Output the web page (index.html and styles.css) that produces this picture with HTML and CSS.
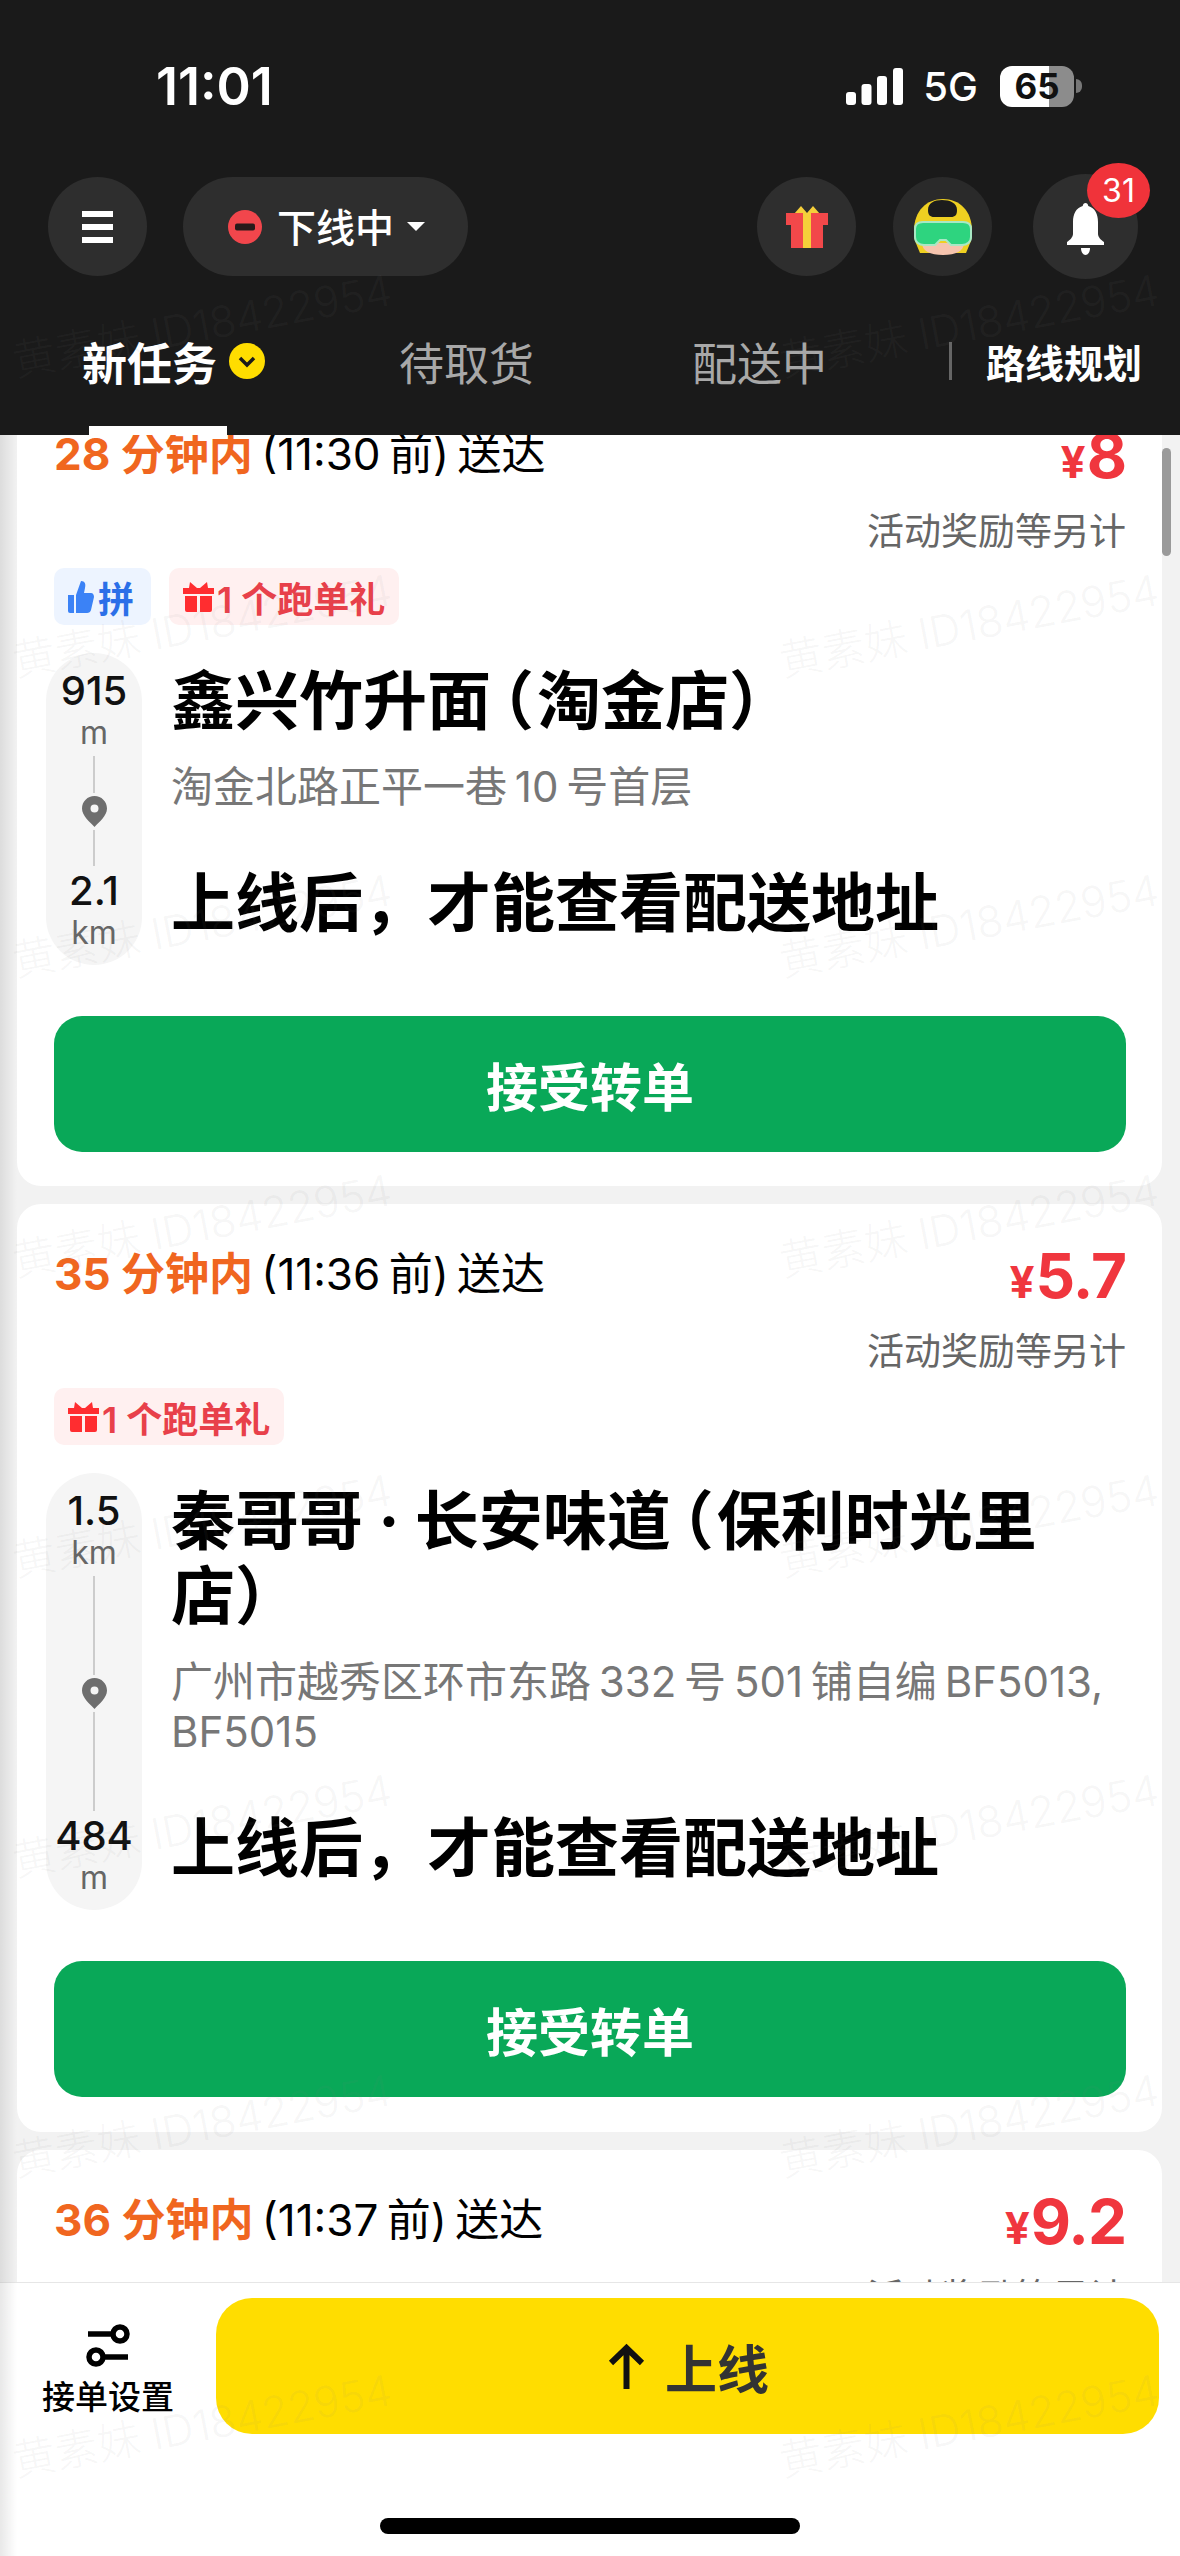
FILE: index.html
```html
<!DOCTYPE html>
<html lang="zh-CN">
<head>
    <meta charset="utf-8">
    <title>新任务</title>
    <link rel="stylesheet" href="styles.css">
</head>
<body>
<div class="phone">
    <header class="header">
        <div class="status">
            <span class="clock">11:01</span>
            <div class="status-right">
                <svg class="signal" width="57" height="37" viewBox="0 0 57 37"><rect x="0" y="24" width="10" height="13" rx="3"/><rect x="15.500" y="16" width="10" height="21" rx="3"/><rect x="31" y="8" width="10" height="29" rx="3"/><rect x="47" y="0" width="10" height="37" rx="3"/></svg>
                <span class="net">5G</span>
                <div class="battery"><span>65</span></div>
                <i class="battery-nub"></i>
            </div>
        </div>

        <div class="toolbar">
            <div class="round">
                <svg width="31" height="32" viewBox="0 0 31 32" fill="#fff"><rect width="31" height="6"/><rect y="13" width="31" height="6"/><rect y="26" width="31" height="6"/></svg>
            </div>
            <div class="state">
                <svg width="34" height="34" viewBox="0 0 34 34"><circle cx="17" cy="17" r="17" fill="#f2464c"/><rect x="7" y="13.500" width="20" height="7" rx="2" fill="#2a1a1a"/></svg>
                <span>下线中</span>
                <i class="caret"></i>
            </div>
            <div class="round round-gift">
                <svg width="42" height="42" viewBox="0 0 42 42"><path d="M8 8L15 0l6 7 6-7 7 8z" fill="#f5cf3a"/><rect y="7" width="42" height="12" fill="#f2484a"/><rect x="5" y="19" width="32" height="23" fill="#f2484a"/><rect x="17" y="7" width="8" height="35" fill="#f5cf3a"/></svg>
            </div>
            <div class="round round-avatar">
                <svg width="62" height="56" viewBox="0 0 62 56">
                    <path d="M3 42C-2 16 12 0 31 0s33 16 28 42l-5 12H8z" fill="#efd021"/>
                    <path d="M16 11C16 4 22 1 30 1s15 3 15 10c0 5-2 7-6 7H22c-4 0-6-2-6-7z" fill="#1c1c1c"/>
                    <path d="M10 44h42c0 8-8 12-21 12S10 52 10 44z" fill="#f6c4ae"/>
                    <path d="M3 30c0-5 3-7 8-7h40c5 0 8 2 8 7v8c0 5-4 8-9 8H39l-5-5h-6l-5 5H12C7 46 3 43 3 38z" fill="#2ed47f" stroke="#a8e8c4" stroke-width="2"/>
                </svg>
            </div>
            <div class="round round-bell">
                <svg width="37" height="52" viewBox="0 0 37 52" fill="#fff"><path d="M18.500 0c1.500 0 2.500 1 2.800 3C28 5 31 11 31 19v12c0 3 3 6 6 8v3H0v-3c3-2 6-5 6-8V19C6 11 9 5 15.700 3 16 1 17 0 18.500 0z"/><path d="M14 45h9c0 4-2 7-4.500 7S14 49 14 45z"/></svg>
                <span class="badge">31</span>
            </div>
        </div>

        <nav class="tabs">
            <div class="tab tab-on">
                <span>新任务</span>
                <svg width="36" height="36" viewBox="0 0 36 36"><circle cx="18" cy="18" r="18" fill="#ffdd00"/><path d="M11 15l7 7 7-7" fill="none" stroke="#1a1a1a" stroke-width="3.500"/></svg>
                <i class="tab-line"></i>
            </div>
            <div class="tab">待取货</div>
            <div class="tab">配送中</div>
            <i class="tab-sep"></i>
            <div class="route">路线规划</div>
        </nav>
    </header>

    <main class="list">
        <section class="card card-first">
            <div class="head">
                <div class="eta"><b>28 分钟内</b> (11:30 前) 送达</div>
                <div class="fee"><div class="price"><small>¥</small>8</div><div class="note">活动奖励等另计</div></div>
            </div>
            <div class="tags">
                <span class="tag tag-blue">
                    <svg width="26" height="32" viewBox="0 0 26 32" fill="#3b82f6"><path d="M0 14h6v18H2a2 2 0 0 1-2-2z"/><path d="M8 14l5-14c4 0 5 3 4 7l-1 5h7c2 0 3 2 3 4l-3 13c-.5 2-2 3-4 3H8z"/></svg>拼</span>
                <span class="tag tag-red">
                    <svg class="gift" width="31" height="30" viewBox="0 0 31 30" fill="#ff2d30"><path d="M7 0l7 6h3l7-6 1 6h6v6H0V6h6z"/><path d="M2 14h12v16H4a2 2 0 0 1-2-2zM17 14h12v14a2 2 0 0 1-2 2H17z"/></svg>1 个跑单礼</span>
            </div>
            <div class="body">
                <div class="route-bar">
                    <div class="dist">915</div>
                    <div class="unit">m</div>
                    <i class="rule"></i>
                    <svg class="pin" width="25" height="31" viewBox="0 0 25 31"><path fill-rule="evenodd" d="M12.500 0C19.400 0 25 5.500 25 12.500 25 20 17 26 12.500 31 8 26 0 20 0 12.500 0 5.500 5.600 0 12.500 0zm0 8.500a4 4 0 1 0 0 8 4 4 0 0 0 0-8z" fill="#6e6e6e"/></svg>
                    <i class="rule"></i>
                    <div class="dist">2.1</div>
                    <div class="unit">km</div>
                </div>
                <div class="info">
                    <h2 class="shop">鑫兴竹升面<span class="paren">（</span>淘金店）</h2>
                    <p class="addr">淘金北路正平一巷 10 号首层</p>
                    <p class="locked">上线后，才能查看配送地址</p>
                </div>
            </div>
            <button class="accept">接受转单</button>
        </section>

        <section class="card">
            <div class="head">
                <div class="eta"><b>35 分钟内</b> (11:36 前) 送达</div>
                <div class="fee"><div class="price"><small>¥</small>5.7</div><div class="note">活动奖励等另计</div></div>
            </div>
            <div class="tags">
                <span class="tag tag-red">
                    <svg class="gift" width="31" height="30" viewBox="0 0 31 30" fill="#ff2d30"><path d="M7 0l7 6h3l7-6 1 6h6v6H0V6h6z"/><path d="M2 14h12v16H4a2 2 0 0 1-2-2zM17 14h12v14a2 2 0 0 1-2 2H17z"/></svg>1 个跑单礼</span>
            </div>
            <div class="body">
                <div class="route-bar">
                    <div class="dist">1.5</div>
                    <div class="unit">km</div>
                    <i class="rule"></i>
                    <svg class="pin" width="25" height="31" viewBox="0 0 25 31"><path fill-rule="evenodd" d="M12.500 0C19.400 0 25 5.500 25 12.500 25 20 17 26 12.500 31 8 26 0 20 0 12.500 0 5.500 5.600 0 12.500 0zm0 8.500a4 4 0 1 0 0 8 4 4 0 0 0 0-8z" fill="#6e6e6e"/></svg>
                    <i class="rule"></i>
                    <div class="dist">484</div>
                    <div class="unit">m</div>
                </div>
                <div class="info">
                    <h2 class="shop">秦哥哥 · 长安味道<span class="paren">（</span>保利时光里店）</h2>
                    <p class="addr">广州市越秀区环市东路 332 号 501 铺自编 BF5013, BF5015</p>
                    <p class="locked">上线后，才能查看配送地址</p>
                </div>
            </div>
            <button class="accept">接受转单</button>
        </section>

        <section class="card">
            <div class="head">
                <div class="eta"><b>36 分钟内</b> (11:37 前) 送达</div>
                <div class="fee"><div class="price"><small>¥</small>9.2</div><div class="note">活动奖励等另计</div></div>
            </div>
        </section>

        <i class="scrollbar"></i>
    </main>

    <footer class="bottom">
        <div class="settings">
            <svg width="44" height="43" viewBox="0 0 44 43" fill="none" stroke="#000" stroke-width="5.500"><path d="M2 10h25"/><circle cx="34" cy="10" r="7"/><path d="M17 33h25"/><circle cx="10" cy="33" r="7"/></svg>
            <span>接单设置</span>
        </div>
        <button class="go">
            <svg width="37" height="46" viewBox="0 0 37 46" fill="none" stroke="#111" stroke-width="6"><path d="M18.500 46V5M3 20L18.500 5 34 20"/></svg>
            <span>上线</span>
        </button>
        <i class="home-bar"></i>
    </footer>

    <i class="edge"></i>

    <div class="marks">
        <span>黄素妹 ID18422954</span><span>黄素妹 ID18422954</span>
        <span>黄素妹 ID18422954</span><span>黄素妹 ID18422954</span>
        <span>黄素妹 ID18422954</span><span>黄素妹 ID18422954</span>
        <span>黄素妹 ID18422954</span><span>黄素妹 ID18422954</span>
        <span>黄素妹 ID18422954</span><span>黄素妹 ID18422954</span>
        <span>黄素妹 ID18422954</span><span>黄素妹 ID18422954</span>
        <span>黄素妹 ID18422954</span><span>黄素妹 ID18422954</span>
        <span>黄素妹 ID18422954</span><span>黄素妹 ID18422954</span>
    </div>
</div>
</body>
</html>
```

FILE: styles.css
```css
* { box-sizing: border-box; }
html, body { margin: 0; padding: 0; }
body { font-family: "Inter", "Noto Sans CJK SC", sans-serif; background: #f2f2f2; color: #000; }
i { display: block; }

.phone { position: relative; width: 1180px; height: 2556px; overflow: hidden; display: flex; flex-direction: column; background: #f2f2f2; }

/* header */
.header { height: 435px; flex: none; background: #1a1a1a; color: #fff; padding-top: 50px; }
.status { height: 72px; display: flex; align-items: center; justify-content: space-between; padding: 0 98px 0 156px; }
.clock { font-size: 52px; font-weight: 600; }
.status-right { display: flex; align-items: center; }
.signal { fill: #fff; }
.net { font-size: 40px; font-weight: 500; margin: 0 22px 0 20px; }
.battery { width: 74px; height: 41px; border-radius: 12px; background: linear-gradient(to right, #fff 49px, #8c8c8c 49px); color: #111; font-size: 35px; font-weight: 700; line-height: 41px; text-align: center; }
.battery-nub { width: 6px; height: 14px; margin-left: 2px; background: #777; border-radius: 0 6px 6px 0; }

.toolbar { height: 99px; margin-top: 55px; padding-left: 48px; display: flex; align-items: center; }
.round { position: relative; width: 99px; height: 99px; border-radius: 50%; background: #2e2e2e; display: flex; align-items: center; justify-content: center; flex: none; }
.state { width: 285px; height: 99px; margin-left: 36px; border-radius: 50px; background: #2e2e2e; display: flex; align-items: center; padding-left: 45px; font-size: 39px; font-weight: 500; }
.state span { margin-left: 15px; padding-bottom: 4px; }
.caret { width: 0; height: 0; margin-left: 13px; border: 9px solid transparent; border-top: 9px solid #fff; border-bottom: 0; }
.round-gift { margin-left: 289px; }
.round-avatar { margin-left: 37px; background: #2a2a2a; }
.round-bell { margin-left: 41px; width: 105px; height: 105px; }
.round-bell svg { margin-top: 4px; }
.badge { position: absolute; top: -11px; right: -12px; width: 63px; height: 55px; border-radius: 50%; background: #f0333a; font-size: 32px; line-height: 55px; text-align: center; }

.tabs { height: 119px; margin-top: 40px; padding: 0 0 29px 27px; display: flex; align-items: center; }
.tab { position: relative; width: 293px; height: 90px; display: flex; align-items: center; justify-content: center; gap: 12px; font-size: 45px; color: #a8a8a8; }
.tab-on { color: #fff; font-weight: 600; }
.tab-line { position: absolute; left: 62px; bottom: -29px; width: 138px; height: 9px; background: #fff; }
.tab-sep { width: 3px; height: 38px; margin-left: 43px; background: #666; }
.route { margin-left: 34px; font-size: 39px; font-weight: 700; }

/* task list */
.list { position: relative; flex: 1; min-height: 0; overflow: hidden; padding: 0 18px 0 17px; }
.card { background: #fff; border-radius: 24px; padding: 0 36px 36px 37px; margin-bottom: 18px; height: 928px; }
.card-first { margin-top: -51px; height: 802px; }
.card:last-of-type { height: 400px; }
.head { display: flex; justify-content: space-between; height: 184px; padding-top: 38px; }
.eta { font-size: 44px; line-height: 64px; white-space: nowrap; word-spacing: -4px; }
.eta b { color: #f0661f; font-weight: 700; word-spacing: 0; }
.fee { text-align: right; }
.price { font-size: 62px; font-weight: 700; line-height: 68px; color: #f0363e; letter-spacing: -1px; }
.price small { font-size: 44px; margin-right: 2px; }
.note { margin-top: 13px; font-size: 37px; line-height: 46px; color: #666; }

.tags { display: flex; gap: 18px; height: 57px; }
.tag { height: 57px; display: flex; align-items: center; border-radius: 10px; font-size: 36px; font-weight: 600; padding: 0 14px; }
.tag-blue { background: #edf4ff; color: #2b6fe8; padding-right: 17px; }
.tag-blue svg { margin-right: 4px; }
.tag-red { background: #fff0f0; color: #e8404a; }
.tag-red svg { margin-right: 3px; }

.body { display: flex; margin-top: 28px; margin-left: -8px; }
.route-bar { width: 96px; flex: none; background: #f5f5f5; border-radius: 48px; padding: 16px 0 12px; display: flex; flex-direction: column; align-items: center; }
.dist { font-size: 40px; font-weight: 500; line-height: 44px; color: #111; white-space: nowrap; }
.unit { font-size: 32px; line-height: 40px; color: #666; }
.rule { flex: 1; width: 2px; margin: 3px 0; background: #ccc; }
.pin { flex: none; }
.info { margin-left: 29px; padding: 10px 0 25px; min-width: 0; flex: 1; }
.shop { margin: 0; font-size: 64px; font-weight: 700; line-height: 75px; }
.paren { font-feature-settings: "halt"; margin: 0 3px 0 11px; }
.addr { margin: 24px 0 0; font-size: 42px; line-height: 50px; color: #777; word-spacing: -4px; }
.locked { margin: 53px 0 0; font-size: 64px; font-weight: 700; line-height: 75px; white-space: nowrap; }

.accept { display: block; width: 1072px; height: 136px; margin-top: 51px; border: 0; border-radius: 28px; background: #09a858; color: #fff; font-family: inherit; font-size: 52px; font-weight: 700; }

.scrollbar { position: absolute; left: 1162px; top: 13px; width: 9px; height: 108px; border-radius: 5px; background: #9a9a9a; }

/* bottom bar */
.bottom { position: relative; height: 274px; flex: none; background: #fff; border-top: 1px solid #e6e6e6; padding: 15px 21px 0 0; display: flex; align-items: flex-start; }
.settings { width: 216px; flex: none; padding-top: 26px; display: flex; flex-direction: column; align-items: center; gap: 10px; font-size: 33px; font-weight: 500; }
.settings span { line-height: 40px; }
.go { width: 943px; height: 136px; border: 0; border-radius: 36px; background: #ffdd00; display: flex; align-items: center; justify-content: center; gap: 20px; padding-left: 8px; font-family: inherit; font-size: 52px; font-weight: 700; color: #333; }
.home-bar { position: absolute; left: 380px; top: 235px; width: 420px; height: 16px; border-radius: 8px; background: #000; }

.edge { position: absolute; left: 0; top: 435px; bottom: 0; width: 17px; background: linear-gradient(to right, rgba(0,0,0,.09), rgba(0,0,0,0)); }

/* watermark lies over everything */
.marks { position: absolute; left: 9px; top: 172px; width: 1160px; display: grid; grid-template-columns: 767px 383px; grid-auto-rows: 300px; pointer-events: none; }
.marks span { align-self: center; width: 383px; font-size: 43px; font-weight: 300; white-space: nowrap; color: rgba(128,128,128,.08); transform: rotate(-10.800deg); }
```
